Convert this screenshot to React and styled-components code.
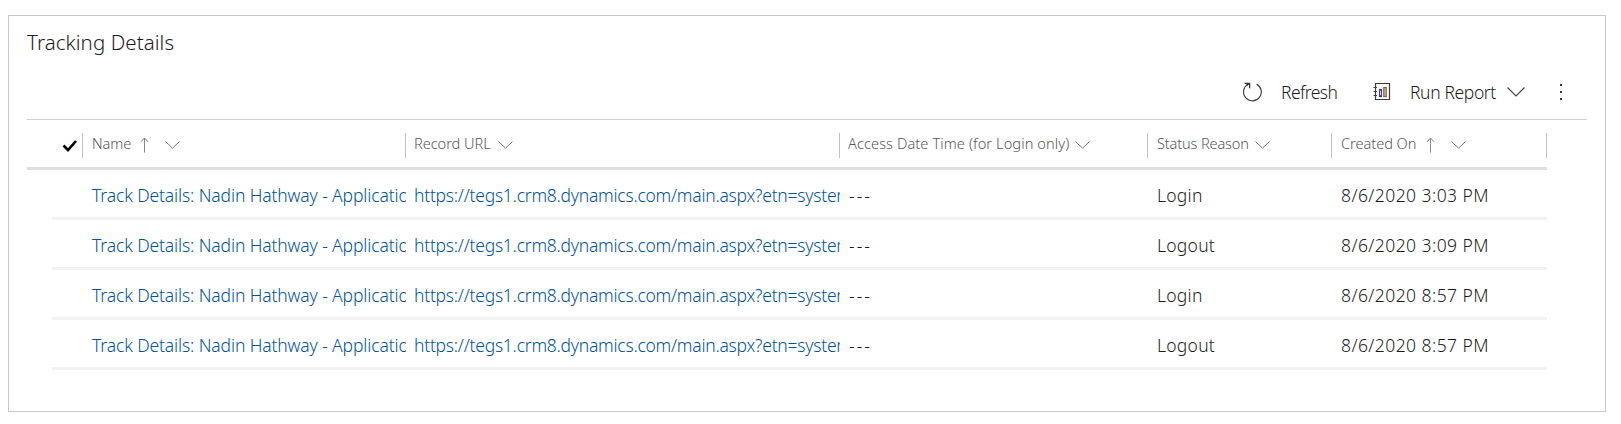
import React from "react";
import styled, { createGlobalStyle } from "styled-components";

const GlobalStyle = createGlobalStyle`
  * { box-sizing: border-box; }
  body {
    margin: 0;
    background: #fff;
    font-family: "Noto Sans", "Open Sans", sans-serif;
    font-weight: 350;
    color: #1c1c1c;
  }
`;

const Card = styled.section`
  width: 1598px;
  height: 397px;
  margin: 15px 0 0 8px;
  padding: 0 18px;
  border: 1px solid #c8c8c8;
  background: #fff;
`;

const Title = styled.h2`
  margin: 0;
  padding: 12px 0 0;
  height: 52px;
  font-size: 20.5px;
  line-height: 28px;
  font-weight: 350;
  letter-spacing: 0.07px;
`;

const CommandBar = styled.div`
  display: flex;
  align-items: center;
  justify-content: flex-end;
  height: 52px;
  padding: 0 24px 3px 0;
  border-bottom: 1px solid #d2d2d2;
`;

const Command = styled.button`
  display: flex;
  align-items: center;
  height: 36px;
  padding: 0;
  border: 0;
  margin: 0 0 0 ${(p) => p.$before || 0}px;
  background: none;
  color: #1c1c1c;
  font: 350 17.5px/36px "Noto Sans", sans-serif;
`;

const CommandLabel = styled.span`
  width: ${(p) => p.$width}px;
  margin-left: ${(p) => p.$gap}px;
  letter-spacing: ${(p) => p.$track}px;
  text-align: left;
  white-space: nowrap;
`;

const Grid = styled.div`
  width: 1520px;
`;

const HeaderRow = styled.div`
  display: grid;
  grid-template-columns: 25px 30px 323px 434px 308px 184px 216px;
  align-items: center;
  height: 50px;
  padding-top: 4px;
  border-bottom: 3px solid #dedede;
`;

const HeaderCell = styled.div`
  display: flex;
  align-items: center;
  height: 25px;
  padding: 0 0 1px ${(p) => p.$inset}px;
  border-left: 1px solid #c0c0c0;
  border-right: ${(p) => (p.$last ? "1px solid #c0c0c0" : "0")};
  color: #55555b;
  font-size: 14.6px;
  line-height: 21px;
  letter-spacing: ${(p) => p.$track}px;
  white-space: nowrap;
`;

const HeaderLabel = styled.span`
  width: ${(p) => p.$width}px;
  padding-bottom: 3px;
`;

const CheckCell = styled.div`
  grid-column: 2;
  display: flex;
  padding-left: 10px;
`;

const SortIcon = styled.svg`
  flex: none;
  margin-left: 9px;
`;

const ChevronIcon = styled.svg`
  flex: none;
  margin-left: ${(p) => p.$gap}px;
`;

const Row = styled.div`
  display: grid;
  grid-template-columns: 31px 323px 434px 308px 184px 215px;
  height: 50px;
  margin-left: 25px;
  border-bottom: 3px solid #f3f3f3;
  font-size: 17.5px;
  line-height: 47px;
`;

const Cell = styled.div`
  padding-top: 2px;
  padding-left: ${(p) => p.$inset || 9}px;
  overflow: hidden;
  white-space: nowrap;
  letter-spacing: ${(p) => p.$track || 0}px;
`;

const LinkCell = styled(Cell).attrs({ as: "a" })`
  color: #00529b;
`;

const MoreIcon = styled.svg`
  display: block;
`;

const CheckMark = () => (
  <svg width="16" height="13" viewBox="0 0 16 13">
    <path d="M1.5 6.5 L6 11 L14 2" fill="none" stroke="#000" strokeWidth="2.6" />
  </svg>
);

const SortUp = () => (
  <SortIcon width="9" height="16" viewBox="0 0 9 16">
    <path d="M4.5 15.5 V1 M1 4.8 L4.5 1 L8 4.8" fill="none" stroke="#85858a" strokeWidth="1" />
  </SortIcon>
);

const Chevron = ({ gap, large }) => (
  <ChevronIcon $gap={gap} width={large ? 18 : 15} height={large ? 10 : 8} viewBox={large ? "0 0 18 10" : "0 0 15 8"}>
    <path
      d={large ? "M.5 .5 L9 9 L17.5 .5" : "M.5 .5 L7.5 7.2 L14.5 .5"}
      fill="none"
      stroke={large ? "#444" : "#77777b"}
      strokeWidth={large ? 1.2 : 1}
    />
  </ChevronIcon>
);

const RefreshIcon = () => (
  <svg width="20" height="20" viewBox="0 0 20 20">
    <path d="M6.4 2 A8.9 8.9 0 1 0 14.6 2.1" fill="none" stroke="#444" strokeWidth="1.2" />
    <path d="M2.6 1.3 H7.6 V6.2 M7.4 1.5 L4.6 3.4" fill="none" stroke="#333" strokeWidth="1.3" />
  </svg>
);

const ReportIcon = () => (
  <svg width="18" height="18" viewBox="0 0 18 18">
    <path d="M2.5 .5 H16.5 V16.5 H2.5 Z" fill="none" stroke="#3c3c3c" strokeWidth="1.2" />
    <path d="M.5 4.5 H4 M.5 8.5 H4 M.5 12.5 H4" stroke="#444" strokeWidth="1.2" />
    <rect x="6.5" y="6.5" width="2" height="7" fill="#fff" stroke="#3f3f80" strokeWidth="1.2" />
    <rect x="10.8" y="4.5" width="2.4" height="9" fill="#a8ccea" stroke="#a05a20" strokeWidth="1.2" />
  </svg>
);

const headers = [
  { label: "Name", width: 39, track: -0.05, inset: 9, sorted: true },
  { label: "Record URL", width: 77, track: -0.05, inset: 8 },
  { label: "Access Date Time (for Login only)", width: 220, track: 0.09, inset: 8 },
  { label: "Status Reason", width: 91, track: -0.16, inset: 9 },
  { label: "Created On", width: 76, track: -0.05, inset: 9, sorted: true },
];

const entries = [
  ["Login", "8/6/2020 3:03 PM"],
  ["Logout", "8/6/2020 3:09 PM"],
  ["Login", "8/6/2020 8:57 PM"],
  ["Logout", "8/6/2020 8:57 PM"],
];

export default function App() {
  return (
    <>
      <GlobalStyle />
      <Card>
        <Title>Tracking Details</Title>
        <CommandBar>
          <Command>
            <RefreshIcon />
            <CommandLabel $gap={19} $width={57} $track={-0.6}>Refresh</CommandLabel>
          </Command>
          <Command $before={35}>
            <ReportIcon />
            <CommandLabel $gap={19} $width={87} $track={-0.38}>Run Report</CommandLabel>
            <Chevron gap={10} large />
          </Command>
          <Command $before={34}>
            <MoreIcon width="4" height="18" viewBox="0 0 4 18">
              <path d="M1 1h2v2H1z M1 8h2v2H1z M1 15h2v2H1z" fill="#333" />
            </MoreIcon>
          </Command>
        </CommandBar>
        <Grid>
          <HeaderRow>
            <CheckCell><CheckMark /></CheckCell>
            {headers.map((h, i) => (
              <HeaderCell key={h.label} $track={h.track} $inset={h.inset} $last={i === headers.length - 1}>
                <HeaderLabel $width={h.width}>{h.label}</HeaderLabel>
                {h.sorted && <SortUp />}
                <Chevron gap={h.sorted ? 16 : 7} />
              </HeaderCell>
            ))}
          </HeaderRow>
          {entries.map(([status, created], i) => (
            <Row key={i}>
              <span />
              <LinkCell $track={-0.12}>Track Details: Nadin Hathway - Application</LinkCell>
              <LinkCell $inset={8} $track={-0.24}>https://tegs1.crm8.dynamics.com/main.aspx?etn=systemuser</LinkCell>
              <Cell $track={2}>---</Cell>
              <Cell $track={0.25}>{status}</Cell>
              <Cell $track={0.43}>{created}</Cell>
            </Row>
          ))}
        </Grid>
      </Card>
    </>
  );
}
